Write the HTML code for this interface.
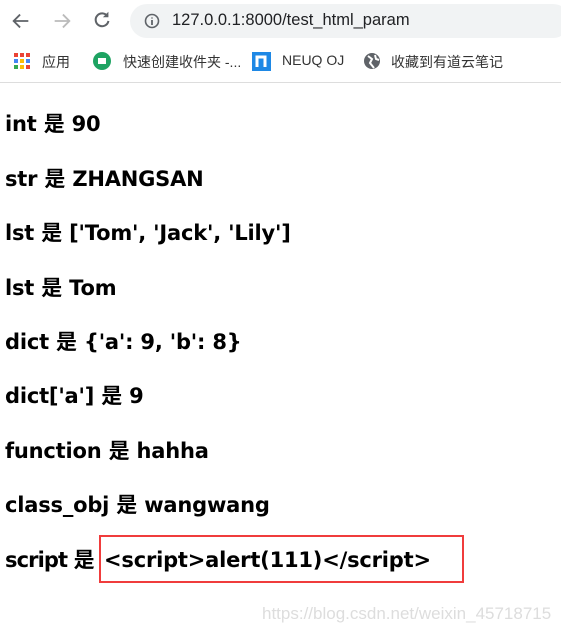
<!DOCTYPE html>
<html><head><meta charset="utf-8"><style>
*{margin:0;padding:0;box-sizing:border-box}
body{width:561px;height:634px;overflow:hidden;background:#fff;font-family:"Liberation Sans","Noto Sans CJK SC",sans-serif;position:relative}
.bar{position:absolute;left:0;top:0;width:561px;height:83px;background:#fff;border-bottom:1px solid #ddd}
.url{position:absolute;left:130px;top:4px;width:440px;height:34px;background:#f1f3f4;border-radius:17px}
.url span{position:absolute;left:42px;top:7px;font-size:16.5px;color:#202124}
.bm{position:absolute;top:52px;font-size:14px;color:#333}
.line{position:absolute;left:5px;font-size:21px;font-weight:bold;color:#000;line-height:28px;white-space:nowrap;font-family:"DejaVu Sans","Noto Sans CJK SC",sans-serif;letter-spacing:-0.2px}
.box{position:absolute;left:99px;top:535px;width:365px;height:48px;border:2px solid #f03c3c}
.wm{position:absolute;left:262px;top:604px;font-size:17px;color:#ddd}
</style></head><body>
<div class="bar">
<svg style="position:absolute;left:10px;top:10px" width="22" height="22" viewBox="0 0 24 24"><path d="M20 12H5M11 5l-7 7 7 7" stroke="#5f6368" stroke-width="2" fill="none"/></svg>
<svg style="position:absolute;left:51px;top:10px" width="22" height="22" viewBox="0 0 24 24"><path d="M4 12h15M13 5l7 7-7 7" stroke="#bbb" stroke-width="2" fill="none"/></svg>
<svg style="position:absolute;left:91px;top:9px" width="22" height="22" viewBox="0 0 24 24"><path d="M18 8A7 7 0 1 0 19 13" stroke="#5f6368" stroke-width="2.2" fill="none"/><path d="M19 3v6h-6z" fill="#5f6368"/></svg>
<div class="url"><svg style="position:absolute;left:14px;top:9px" width="16" height="16" viewBox="0 0 16 16"><circle cx="8" cy="8" r="6.5" stroke="#5f6368" stroke-width="1.6" fill="none"/><path d="M8 7v5M8 4.5v1" stroke="#5f6368" stroke-width="1.8"/></svg><span>127.0.0.1:8000/test_html_param</span></div>
<svg style="position:absolute;left:14px;top:53px" width="16" height="16"><g><rect x="0" y="0" width="4" height="4" fill="#ea4335"/><rect x="6" y="0" width="4" height="4" fill="#ea4335"/><rect x="12" y="0" width="4" height="4" fill="#ea4335"/><rect x="0" y="6" width="4" height="4" fill="#4285f4"/><rect x="6" y="6" width="4" height="4" fill="#fbbc05"/><rect x="12" y="6" width="4" height="4" fill="#4285f4"/><rect x="0" y="12" width="4" height="4" fill="#34a853"/><rect x="6" y="12" width="4" height="4" fill="#fbbc05"/><rect x="12" y="12" width="4" height="4" fill="#ea4335"/></g></svg>
<span class="bm" style="left:42px">应用</span>
<svg style="position:absolute;left:93px;top:52px" width="18" height="18"><circle cx="9" cy="9" r="9" fill="#1ea362"/><rect x="5" y="6" width="8" height="6" fill="#fff"/></svg>
<span class="bm" style="left:123px">快速创建收件夹 -...</span>
<svg style="position:absolute;left:252px;top:52px" width="19" height="19"><rect width="19" height="19" fill="#1e88e5"/><path d="M5 15V5h8v10" stroke="#fff" stroke-width="3" fill="none"/></svg>
<span class="bm" style="left:282px">NEUQ OJ</span>
<svg style="position:absolute;left:363px;top:52px" width="18" height="18"><circle cx="9" cy="9" r="8" fill="#5f6368"/><path d="M5 4l4 3-2 4 4 5M12 3l1 4 3 1" stroke="#fff" stroke-width="2" fill="none"/></svg>
<span class="bm" style="left:391px">收藏到有道云笔记</span>
</div>
<div class="line" style="top:110px">int 是 90</div>
<div class="line" style="top:165px">str 是 ZHANGSAN</div>
<div class="line" style="top:219px">lst 是 ['Tom', 'Jack', 'Lily']</div>
<div class="line" style="top:274px">lst 是 Tom</div>
<div class="line" style="top:328px">dict 是 {'a': 9, 'b': 8}</div>
<div class="line" style="top:382px">dict['a'] 是 9</div>
<div class="line" style="top:437px">function 是 hahha</div>
<div class="line" style="top:491px">class_obj 是 wangwang</div>
<div class="line" style="top:546px"><span style="letter-spacing:-0.9px">script 是</span> <span style="position:absolute;left:99px;top:0">&lt;script&gt;alert(111)&lt;/script&gt;</span></div>
<div class="box"></div>
<div class="wm">https://blog.csdn.net/weixin_45718715</div>
</body></html>
